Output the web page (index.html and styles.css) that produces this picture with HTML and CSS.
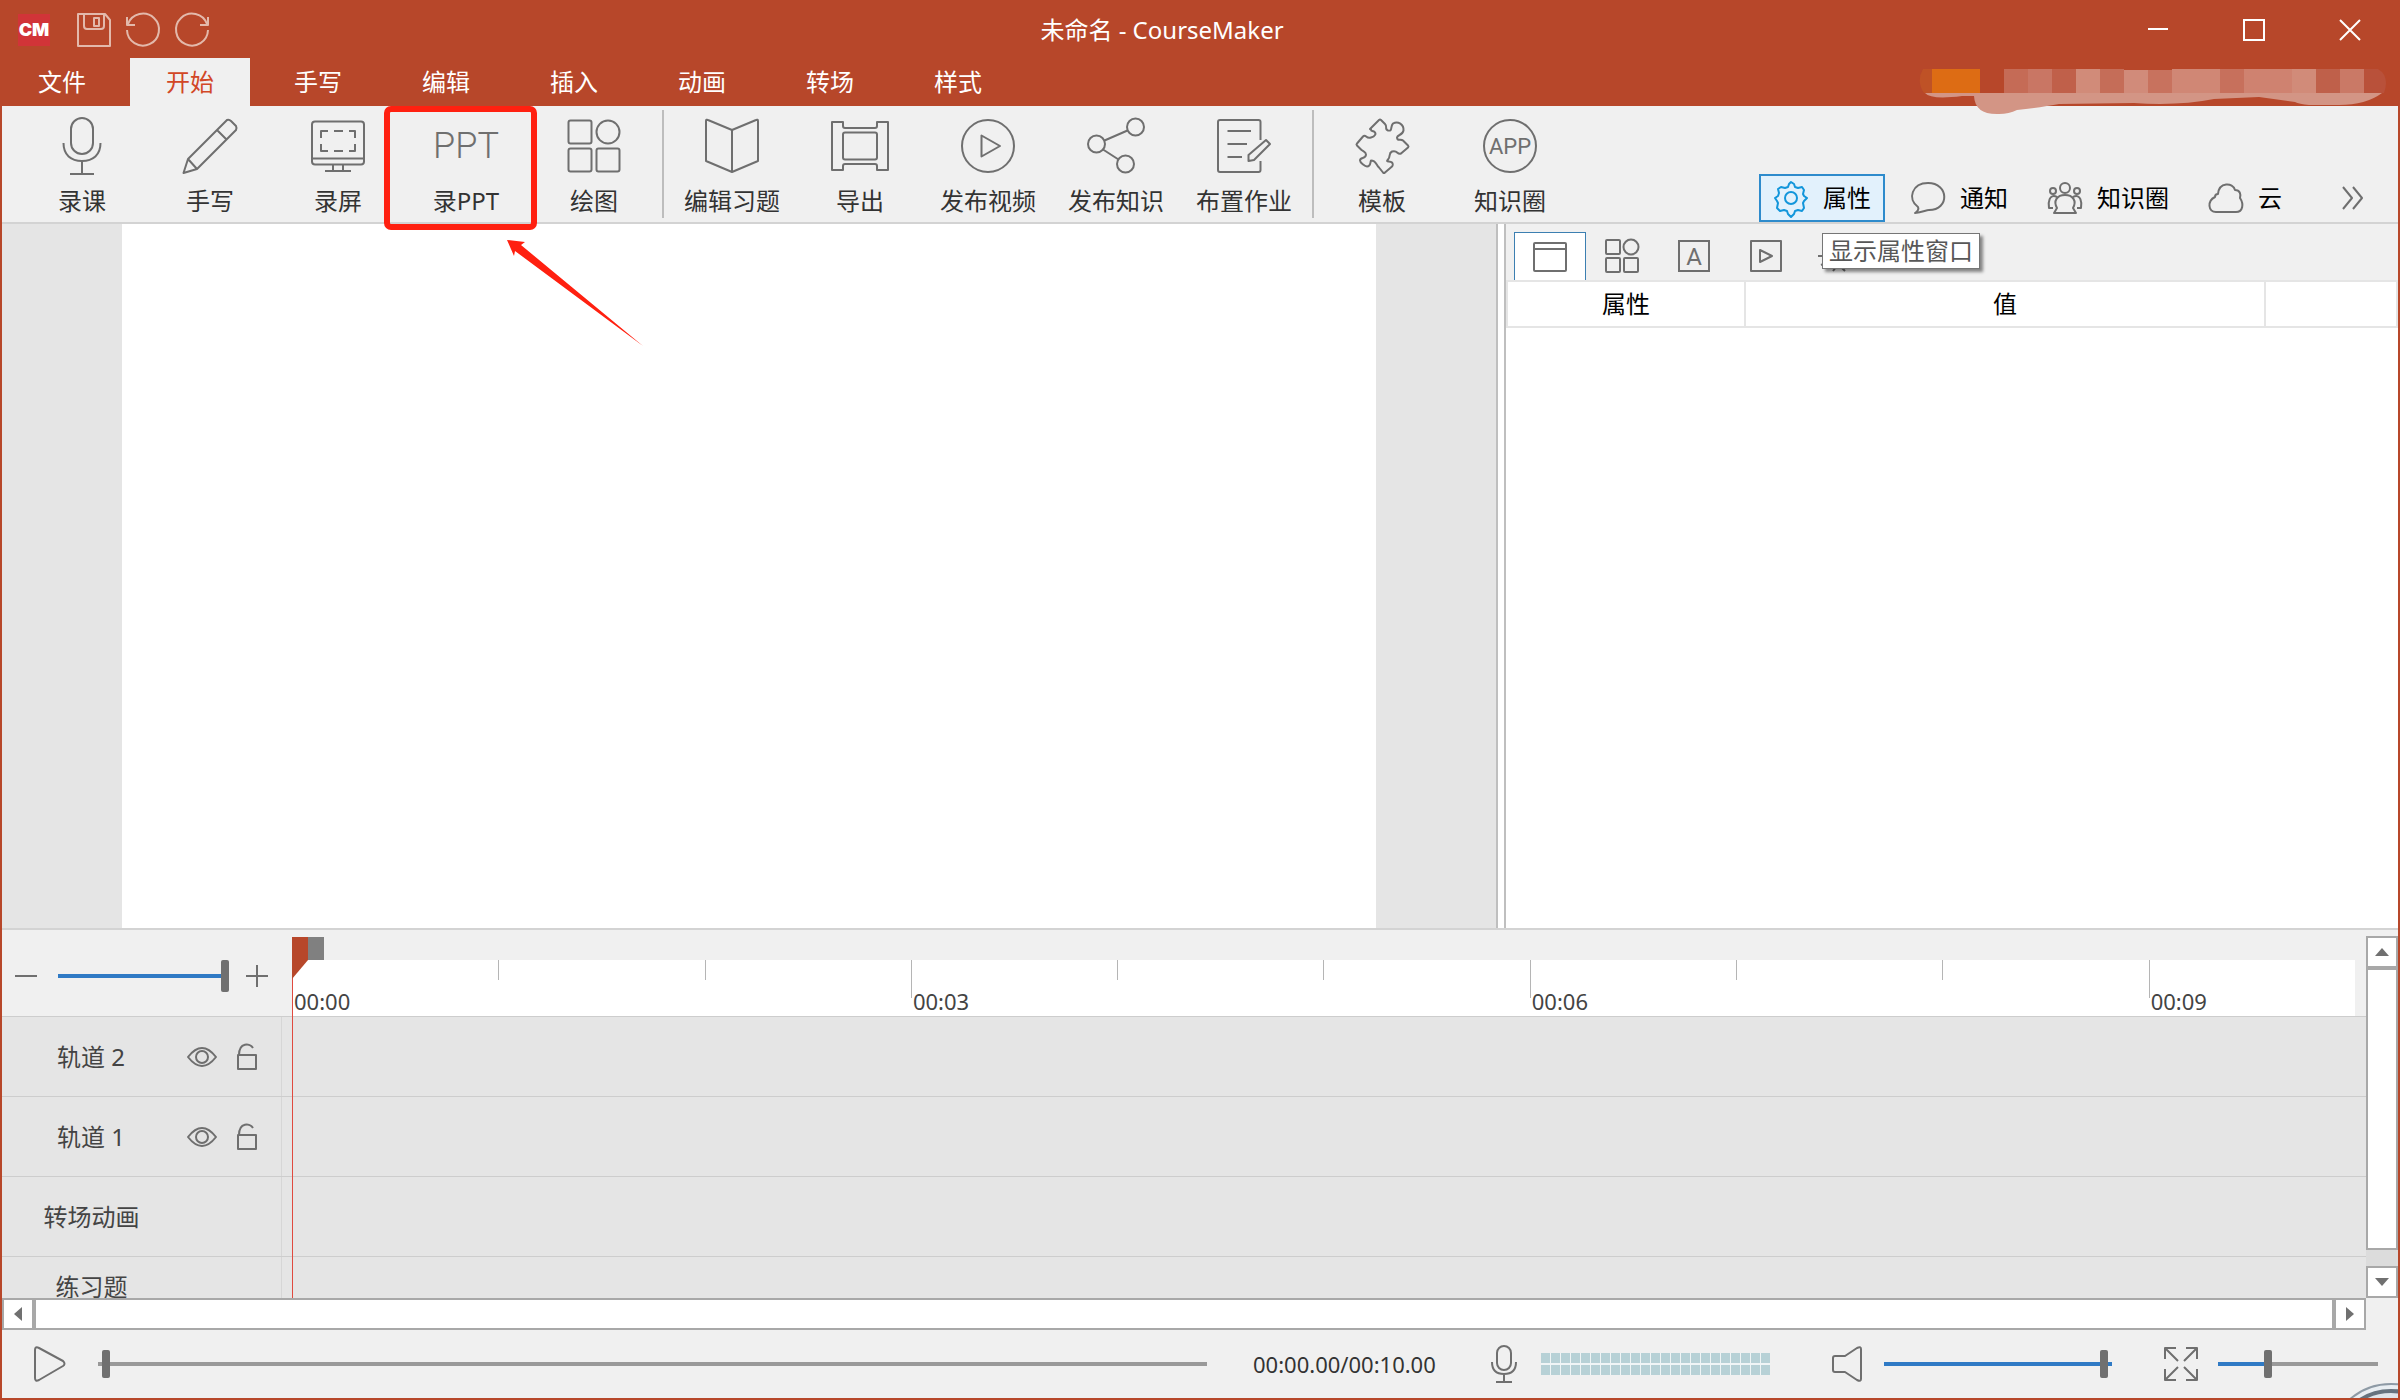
FILE: index.html
```html
<!DOCTYPE html>
<html lang="zh-CN">
<head>
    <meta charset="UTF-8">
    <meta name="viewport" content="width=device-width, initial-scale=1.0">
    <title>未命名 - CourseMaker</title>
    <link rel="stylesheet" href="styles.css">
</head>
<body>
    <header class="titlebar">
        <div class="quick-bar">
            <span class="logo">CM</span>
            <button class="quick-btn" aria-label="保存">
                <svg class="icon" width="34" height="34" viewBox="0 0 34 34"><path d="M1 1h27l5 6v26H1z M7 1v12q0 3 3 3h14q3 0 3-3V1 M17 5h5v8h-5z"/></svg>
            </button>
            <button class="quick-btn" aria-label="撤销">
                <svg class="icon" width="34" height="34" viewBox="0 0 34 34"><path d="M1 4v8h8 M2 11A16 16 0 1 1 1 17"/></svg>
            </button>
            <button class="quick-btn" aria-label="重做">
                <svg class="icon" width="34" height="34" viewBox="0 0 34 34"><path d="M33 4v8h-8 M32 11A16 16 0 1 0 33 17"/></svg>
            </button>
        </div>
        <h1 class="title">未命名 - CourseMaker</h1>
        <div class="window-btns">
            <button aria-label="最小化"><svg class="icon" width="24" height="24" viewBox="0 0 24 24"><path d="M2 11h20"/></svg></button>
            <button aria-label="最大化"><svg class="icon" width="24" height="24" viewBox="0 0 24 24"><path d="M2 2h20v20H2z"/></svg></button>
            <button aria-label="关闭"><svg class="icon" width="24" height="24" viewBox="0 0 24 24"><path d="M2 2l20 20M22 2L2 22"/></svg></button>
        </div>
    </header>

    <nav class="tabs">
        <button class="tab">文件</button>
        <button class="tab active">开始</button>
        <button class="tab">手写</button>
        <button class="tab">编辑</button>
        <button class="tab">插入</button>
        <button class="tab">动画</button>
        <button class="tab">转场</button>
        <button class="tab">样式</button>
        <!-- blurred account name -->
        <svg class="account" width="468" height="48" viewBox="0 0 468 48">
            <path fill="#bf5226" d="M4 1h10v24H5Q-3 13 4 1z"/>
            <path fill="#dd6c14" d="M13 1h48v24H13z"/>
            <path fill="#c56b56" d="M85 1h24v24H85z"/>
            <path fill="#c97664" d="M109 1h24v24h-24z"/>
            <path fill="#c0604a" d="M133 1h24v24h-24z"/>
            <path fill="#d18b79" d="M157 1h24v24h-24z"/>
            <path fill="#c56d58" d="M181 1h24v24h-24z"/>
            <path fill="#d18b7a" d="M205 2h24v23h-24z"/>
            <path fill="#c8725e" d="M229 2h24v23h-24z"/>
            <path fill="#d08775" d="M253 1h48v24h-48z"/>
            <path fill="#c7705c" d="M301 1h24v24h-24z"/>
            <path fill="#cf8270" d="M325 1h48v24h-48z"/>
            <path fill="#d18b79" d="M373 1h24v24h-24z"/>
            <path fill="#bf604a" d="M397 1h24v24h-24z"/>
            <path fill="#ca7966" d="M421 1h24v24h-24z"/>
            <path fill="#b9513a" d="M445 1h14Q471 8 465 25h-20z"/>
            <path fill="#d39585" d="M6 25h457Q447 37 420 37h-30Q380 36 376 34L340 29 295 31Q260 38 215 35L140 36Q125 39 98 42 90 46 80 46 56 47 55 28H43Q12 32 6 25z"/>
        </svg>
    </nav>

    <div class="ribbon">
        <div class="group">
            <button class="tool">
                <svg class="icon" width="64" height="64" viewBox="0 0 64 64"><rect x="21" y="4" width="22" height="36" rx="11"/><path d="M13.500 29C13.500 41 21 47 32 47S50.500 41 50.500 29M32 47v13M20 60h24"/></svg>
                <span>录课</span>
            </button>
            <button class="tool">
                <svg class="icon" width="64" height="64" viewBox="0 0 64 64"><path d="M5.500 59L10 45 49 6q2-1 4 1l5 5q1 2 0 4L19 55zM39 16l9 9M10 45l9 10"/></svg>
                <span>手写</span>
            </button>
            <button class="tool">
                <svg class="icon" width="64" height="64" viewBox="0 0 64 64"><rect x="6" y="7.500" width="52" height="43" rx="3"/><path d="M6 44.500h52M27 51v6M37 51v6M19 57h26"/><path d="M15 24v-7h7M28 17h9M43 17h6v7M15 30v7h7M28 37h9M43 37h6v-7"/></svg>
                <span>录屏</span>
            </button>
            <button class="tool marked">
                <span class="ppt">PPT</span>
                <span>录PPT</span>
            </button>
            <button class="tool">
                <svg class="icon" width="64" height="64" viewBox="0 0 64 64"><rect x="6.500" y="6.500" width="23" height="23" rx="2"/><circle cx="46" cy="18" r="11.500"/><rect x="6.500" y="34.500" width="23" height="23" rx="2"/><rect x="34.500" y="34.500" width="23" height="23" rx="2"/></svg>
                <span>绘图</span>
            </button>
        </div>
        <div class="group">
            <button class="tool">
                <svg class="icon" width="64" height="64" viewBox="0 0 64 64"><path d="M32 16L8 6Q6 5 6 7v40l26 11 26-11V7q0-2-2-1zM32 16v42"/></svg>
                <span>编辑习题</span>
            </button>
            <button class="tool">
                <svg class="icon" width="64" height="64" viewBox="0 0 64 64"><path d="M4 8h11v4q0 2 2 2h30q2 0 2-2V8h11v48H49v-4q0-2-2-2H17q-2 0-2 2v4H4z"/><rect x="15" y="18.500" width="34" height="27" rx="2"/></svg>
                <span>导出</span>
            </button>
            <button class="tool">
                <svg class="icon" width="64" height="64" viewBox="0 0 64 64"><circle cx="32" cy="32" r="26"/><path d="M25.500 21.500v21L44 32z"/></svg>
                <span>发布视频</span>
            </button>
            <button class="tool">
                <svg class="icon" width="64" height="64" viewBox="0 0 64 64"><circle cx="51.500" cy="13" r="8.500"/><circle cx="12.500" cy="30" r="8.500"/><circle cx="41.500" cy="50" r="8.500"/><path d="M20.500 26.500l23-10M19 35.500l15.500 10"/></svg>
                <span>发布知识</span>
            </button>
            <button class="tool">
                <svg class="icon" width="64" height="64" viewBox="0 0 64 64"><path d="M48.500 26V8q0-2-2-2H8Q6 6 6 8v48q0 2 2 2h38.500q2 0 2-2v-9M15.500 17H39M15.500 30H35M15.500 43H30M36.500 47v-6L54 26l4 4-16 16z"/></svg>
                <span>布置作业</span>
            </button>
        </div>
        <div class="group">
            <button class="tool">
                <svg class="icon" width="64" height="64" viewBox="0 0 64 64"><path d="M20 15l9-9q1-1 2 0l4 4c3 3-1 5 3 6.500 5 1 2-4 5-7 5-3 11 1 10.500 7-1 5-6 4-6.500 7 0 4 4 1 6 3l5 5q1 1 0 2l-7 6c-4 2-3-4-9-2-4 2-1 5-4 8-3 3 2 1 4 3 1 1 1 3 0 4l-7 6q-1 1-2 0l-4-5c-3-3-3-7-8-7-1 2 0 6-4 6-2 0-7-4-7-6 0-4 6-1 6-6 0-3-3-3-5-5l-4-4q-1-1 0-2l6-7c3-3 3 3 8 1 4-1 6-4 3-6-2-1-3 0-3-2z"/></svg>
                <span>模板</span>
            </button>
            <button class="tool">
                <span class="app">APP</span>
                <span>知识圈</span>
            </button>
        </div>
        <div class="side-tabs">
            <button class="side-tab active">
                <svg class="icon" width="36" height="36" viewBox="0 0 36 36"><circle cx="18" cy="18" r="6"/><path d="M18 2l3 2 1 3 3 1 4-1 2 3-1 4 1 2 3 2-3 3-1 2 1 5-2 3-4-1-3 1-1 3-3 3-3-3-1-3-3-1-4 1-3-3 1-5-1-2-2-3 3-2 1-3-1-4 3-2 4 1 3-1 1-3z"/></svg>
                <span>属性</span>
            </button>
            <button class="side-tab">
                <svg class="icon" width="36" height="36" viewBox="0 0 36 36"><path d="M8 27C-3 19 2 3 18 3c21 0 22 27 1 27-3 0-6 2-14 3 3-2 4-4 3-6z"/></svg>
                <span>通知</span>
            </button>
            <button class="side-tab">
                <svg class="icon" width="36" height="36" viewBox="0 0 36 36"><circle cx="18" cy="8" r="5"/><circle cx="6" cy="11" r="3"/><circle cx="30" cy="11" r="3"/><path d="M10 28c-4-7 0-13 8-13s12 6 8 13l3 5H7zM10 17c-8-4-9 6-8 11h4M26 17c8-4 9 6 8 11h-4"/></svg>
                <span>知识圈</span>
            </button>
            <button class="side-tab">
                <svg class="icon" width="36" height="36" viewBox="0 0 36 36"><path d="M10 14C11 2 25 2 27 10c5 0 6 4 5 8 4 6 3 14-4 14H8c-8 0-9-11-1-15 0-2 1-3 3-3z"/></svg>
                <span>云</span>
            </button>
            <button class="more" aria-label="更多"><svg class="icon" width="22" height="24" viewBox="0 0 22 24"><path d="M1 1l9 11-9 11M11 1l9 11-9 11"/></svg></button>
        </div>
    </div>

    <main class="workspace">
        <div class="stage"><div class="slide"></div></div>
        <div class="splitter"></div>
        <aside class="panel">
            <div class="panel-tabs">
                <button class="panel-tab active" aria-label="窗口"><svg class="icon" width="36" height="36" viewBox="0 0 36 36"><rect x="2" y="4" width="32" height="28" rx="1"/><path d="M2 10h32"/></svg></button>
                <button class="panel-tab" aria-label="形状"><svg class="icon" width="36" height="36" viewBox="0 0 36 36"><rect x="2" y="2" width="14" height="14" rx="1"/><circle cx="27" cy="9" r="7.500"/><rect x="2" y="20" width="14" height="14" rx="1"/><rect x="20" y="20" width="14" height="14" rx="1"/></svg></button>
                <button class="panel-tab" aria-label="文字"><span class="letter">A</span></button>
                <button class="panel-tab" aria-label="视频"><svg class="icon" width="36" height="36" viewBox="0 0 36 36"><rect x="3" y="3" width="30" height="30"/><path d="M12 12v12l12-6z"/></svg></button>
                <button class="panel-tab" aria-label="效果"><svg class="icon" width="36" height="36" viewBox="0 0 36 36"><path d="M-2 18h8M1 27l5-2M13 33l4-5h3l5 5"/></svg></button>
                <span class="tooltip" role="tooltip">显示属性窗口</span>
            </div>
            <table class="props">
                <thead>
                    <tr><th class="col-name">属性</th><th class="col-value">值</th><th></th></tr>
                </thead>
            </table>
        </aside>
    </main>

    <section class="timeline">
        <div class="timeline-main">
            <div class="time-head">
                <div class="zoom">
                    <button aria-label="缩小"><svg class="icon" width="24" height="24" viewBox="0 0 24 24"><path d="M1 12h22"/></svg></button>
                    <input class="slider" type="range" aria-label="时间轴缩放" min="0" max="100" value="100" style="--fill: 100%">
                    <button aria-label="放大"><svg class="icon" width="24" height="24" viewBox="0 0 24 24"><path d="M1 12h22M12 1v22"/></svg></button>
                </div>
                <div class="ruler">
                    <div class="cell major"><span>00:00</span></div>
                    <div class="cell"></div>
                    <div class="cell"></div>
                    <div class="cell major"><span>00:03</span></div>
                    <div class="cell"></div>
                    <div class="cell"></div>
                    <div class="cell major"><span>00:06</span></div>
                    <div class="cell"></div>
                    <div class="cell"></div>
                    <div class="cell major"><span>00:09</span></div>
                </div>
            </div>
            <div class="track">
                <div class="track-head">
                    <span class="track-name">轨道 2</span>
                    <button aria-label="显示轨道 2"><svg class="icon" width="30" height="26" viewBox="0 0 30 26"><path d="M1 13Q15-5 29 13 15 31 1 13z"/><circle cx="15" cy="13" r="6"/></svg></button>
                    <button aria-label="锁定轨道 2"><svg class="icon" width="20" height="26" viewBox="0 0 20 26"><path d="M1 11h18v14H1zM2 11C2-2 13-1 16 4"/></svg></button>
                </div>
            </div>
            <div class="track">
                <div class="track-head">
                    <span class="track-name">轨道 1</span>
                    <button aria-label="显示轨道 1"><svg class="icon" width="30" height="26" viewBox="0 0 30 26"><path d="M1 13Q15-5 29 13 15 31 1 13z"/><circle cx="15" cy="13" r="6"/></svg></button>
                    <button aria-label="锁定轨道 1"><svg class="icon" width="20" height="26" viewBox="0 0 20 26"><path d="M1 11h18v14H1zM2 11C2-2 13-1 16 4"/></svg></button>
                </div>
            </div>
            <div class="track"><div class="track-head plain">转场动画</div></div>
            <div class="track cut"><div class="track-head plain">练习题</div></div>
            <div class="playhead">
                <svg width="32" height="42" viewBox="0 0 32 42"><path fill="#808080" d="M16 0h16v23H16z"/><path fill="#b7472a" d="M0 0h16v23L0 42z"/></svg>
            </div>
        </div>
        <div class="vscroll">
            <button aria-label="向上滚动"><svg width="14" height="8" viewBox="0 0 14 8"><path d="M0 8l7-8 7 8z"/></svg></button>
            <div class="thumb"></div>
            <button aria-label="向下滚动"><svg width="14" height="8" viewBox="0 0 14 8"><path d="M0 0h14L7 8z"/></svg></button>
        </div>
    </section>
    <div class="hscroll">
        <button aria-label="向左滚动"><svg width="8" height="14" viewBox="0 0 8 14"><path d="M8 0v14L0 7z"/></svg></button>
        <div class="thumb"></div>
        <button aria-label="向右滚动"><svg width="8" height="14" viewBox="0 0 8 14"><path d="M0 0l8 7-8 7z"/></svg></button>
    </div>

    <footer class="player">
        <button aria-label="播放"><svg class="icon" width="32" height="36" viewBox="0 0 32 36"><path d="M1 4q0-4 4-2l24 13q3 3 0 5L5 34q-4 2-4-2z"/></svg></button>
        <input class="slider seek" type="range" aria-label="播放进度" min="0" max="1000" value="4" style="--fill: 0%">
        <span class="time">00:00.00/00:10.00</span>
        <button aria-label="麦克风"><svg class="icon" width="26" height="40" viewBox="0 0 26 40"><rect x="6" y="2" width="14" height="24" rx="7"/><path d="M1 18c0 8 4 12 12 12s12-4 12-12M13 30v8M5 38h16"/></svg></button>
        <div class="meter"></div>
        <button class="speaker" aria-label="音量"><svg class="icon" width="30" height="36" viewBox="0 0 30 36"><path d="M1 12q0-2 2-2h10L25 2q4-2 4 1v30q0 3-4 1l-12-8H3q-2 0-2-2z"/></svg></button>
        <input class="slider volume" type="range" aria-label="音量大小" min="0" max="100" value="98" style="--fill: 100%">
        <button class="fit" aria-label="适应窗口"><svg class="icon" width="34" height="36" viewBox="0 0 34 36"><path d="M1 13V2h11M1 2l13 13M22 2h11v11M33 2L20 15M1 23v11h11M1 34l13-13M22 34h11V23M33 34L20 21"/></svg></button>
        <input class="slider scale" type="range" aria-label="画布缩放" min="0" max="100" value="30" style="--fill: 31%">
        <svg class="corner" width="52" height="18" viewBox="0 0 52 18"><circle cx="43" cy="65" r="63" fill="#e9eef2" stroke="#8e9aa5" stroke-width="2"/><circle cx="43" cy="66" r="57" fill="#dfe5ea" stroke="#66737e" stroke-width="4"/></svg>
    </footer>
</body>
</html>
```
FILE: styles.css
```css
*, *::before, *::after {
    box-sizing: border-box;
}

html, body {
    height: 100%;
    margin: 0;
}

body {
    display: flex;
    flex-direction: column;
    overflow: hidden;
    border: 2px solid #b7472a;
    border-top: none;
    background-color: #f0f0f0;
    color: #333;
    font-family: "Noto Sans", "Noto Sans CJK SC", sans-serif;
    font-size: 24px;
    line-height: 32px;
}

button {
    display: flex;
    align-items: center;
    justify-content: center;
    padding: 0;
    border: none;
    background: none;
    color: inherit;
    font: inherit;
    cursor: pointer;
}

svg {
    display: block;
    flex: none;
}

.icon {
    fill: none;
    stroke: #6f6f6f;
    stroke-width: 2;
    stroke-linejoin: round;
    overflow: visible;
}

/* title bar */
.titlebar {
    display: flex;
    height: 58px;
    background-color: #b7472a;
    color: #fff;
}

.quick-bar {
    display: flex;
    align-items: center;
    gap: 15px;
    width: 212px;
    padding: 2px 0 0 16px;
}

.logo {
    width: 32px;
    margin-right: 12px;
    background-color: #d13438;
    font-family: Inter, sans-serif;
    font-size: 18px;
    font-weight: 900;
    text-align: center;
}

.quick-btn .icon {
    stroke: #e3b9ab;
}

.title {
    flex: 1;
    margin: 0;
    font-size: 24px;
    font-weight: normal;
    line-height: 60px;
    text-align: center;
}

.window-btns {
    display: flex;
}

.window-btns button {
    width: 96px;
    height: 60px;
}

.window-btns .icon {
    stroke: #fff;
    stroke-linejoin: miter;
}

/* menu tabs */
.tabs {
    position: relative;
    display: flex;
    gap: 8px;
    height: 48px;
    background-color: #b7472a;
    color: #fff;
}

.tab {
    width: 120px;
}

.tab.active {
    background-color: #f0f0f0;
    color: #d24726;
}

.account {
    position: absolute;
    top: 10px;
    right: 11px;
    z-index: 1;
}

/* ribbon */
.ribbon {
    display: flex;
    height: 118px;
    padding: 0 19px 0 16px;
    border-bottom: 2px solid #d3d3d3;
}

.group {
    display: flex;
}

.group + .group {
    margin-left: 4px;
    padding-left: 4px;
    background: linear-gradient(#bdbdbd, #bdbdbd) 0 4px / 2px 108px no-repeat;
    border-left: 2px solid transparent;
    background-origin: border-box;
    background-clip: border-box;
}

.tool {
    flex-direction: column;
    justify-content: flex-start;
    gap: 7px;
    width: 128px;
    padding-top: 8px;
    white-space: nowrap;
}

.tool.marked {
    position: relative;
}

.tool.marked::before {
    content: "";
    position: absolute;
    top: 0;
    left: -18px;
    width: 153px;
    height: 124px;
    border: 6px solid #ff2010;
    border-radius: 7px;
}

.tool.marked::after {
    content: "";
    position: absolute;
    top: 134px;
    left: 105px;
    width: 136px;
    height: 106px;
    background-color: #ff2010;
    clip-path: polygon(0 0, 18px 2px, 14px 5px, 100% 100%, 8px 11px, 7px 16px);
}

.ppt {
    height: 64px;
    color: #6f6f6f;
    font-family: Roboto, sans-serif;
    font-size: 36px;
    font-weight: 300;
    line-height: 64px;
}

.app {
    width: 54px;
    height: 54px;
    margin: 5px 0;
    border: 2px solid #6f6f6f;
    border-radius: 50%;
    color: #6f6f6f;
    font-family: Roboto, sans-serif;
    font-size: 22px;
    font-weight: 400;
    line-height: 52px;
}

.side-tabs {
    display: flex;
    align-items: flex-end;
    gap: 11px;
    margin-left: auto;
    color: #000;
}

.side-tab {
    gap: 14px;
    height: 48px;
    padding: 0 14px;
}

.side-tab.active {
    padding: 0 12px;
    border: 2px solid #2e8bcc;
    background-color: #e2f1fc;
}

.side-tab.active .icon {
    stroke: #1296db;
}

.more {
    width: 52px;
    height: 48px;
    margin-left: 20px;
}

/* canvas and property panel */
.workspace {
    display: flex;
    flex: 1;
    min-height: 0;
    background-color: #fff;
}

.stage {
    display: flex;
    flex: 1;
    padding: 0 120px;
    background-color: #e5e5e5;
}

.slide {
    flex: 1;
    background-color: #fff;
}

.splitter {
    width: 10px;
    border: 2px solid #bfbfbf;
    border-width: 0 2px;
}

.panel {
    width: 892px;
}

.panel-tabs {
    position: relative;
    display: flex;
    padding: 8px 8px 0;
    background-color: #f0f0f0;
}

.panel-tab {
    width: 72px;
    height: 48px;
}

.panel-tab.active {
    border: 1px solid #3c7fb1;
    border-bottom: none;
    background-color: #fff;
}

.letter {
    width: 32px;
    height: 32px;
    border: 2px solid #6f6f6f;
    color: #6f6f6f;
    font-family: Roboto, sans-serif;
    font-weight: 400;
    line-height: 30px;
}

.tooltip {
    position: absolute;
    top: 9px;
    left: 316px;
    padding: 1px 6px;
    border: 1px solid #767676;
    background-color: #fff;
    box-shadow: 3px 3px 3px rgba(0, 0, 0, 0.45);
    color: #575757;
}

.props {
    width: 100%;
    border-collapse: collapse;
    table-layout: fixed;
    color: #000;
}

.props th {
    height: 46px;
    padding: 0;
    border: 2px solid #e5e5e5;
    font-weight: normal;
}

.col-name {
    width: 238px;
}

.col-value {
    width: 520px;
}

/* timeline */
.timeline {
    display: flex;
    border-top: 2px solid #d3d3d3;
}

.timeline-main {
    position: relative;
    flex: 1;
    color: #444;
}

.time-head {
    display: flex;
    height: 86px;
    padding-right: 11px;
}

.zoom {
    display: flex;
    align-items: center;
    gap: 16px;
    width: 290px;
    padding: 6px 23px 0 12px;
}

.slider {
    flex: 1;
    min-width: 0;
    height: 32px;
    margin: 0;
    appearance: none;
    background: linear-gradient(to right, #2f7ac5 var(--fill), #999 var(--fill)) center / 100% 4px no-repeat;
}

.slider::-webkit-slider-thumb {
    appearance: none;
    width: 8px;
    height: 28px;
    border-radius: 2px;
    background-color: #707070;
}

.zoom .slider {
    margin-left: 4px;
}

.zoom .slider::-webkit-slider-thumb {
    height: 32px;
}

.ruler {
    display: flex;
    flex: 1;
    margin-top: 30px;
    background-color: #fff;
    font-size: 22px;
}

.cell {
    display: flex;
    flex: 1;
    align-items: flex-end;
    background: linear-gradient(#b5b5b5, #b5b5b5) 0 0 / 1px 20px no-repeat;
}

.cell.major {
    background-size: 1px 38px;
}

.cell span {
    padding-left: 2px;
    line-height: 30px;
}

.track {
    height: 80px;
    border-top: 1px solid #cdcdcd;
    background-color: #e5e5e5;
}

.track.cut {
    height: 42px;
    overflow: hidden;
}

.track-head {
    display: flex;
    align-items: center;
    gap: 20px;
    width: 280px;
    height: 79px;
    padding-left: 55px;
    border-right: 1px solid #d6d6d6;
}

.track-name {
    width: 110px;
}

.track-head.plain {
    justify-content: center;
    padding: 0 100px 0 0;
}

.track.cut .track-head {
    height: 60px;
}

.playhead {
    position: absolute;
    top: 7px;
    bottom: 0;
    left: 290px;
    width: 1px;
    background-color: #e04a3f;
}

.vscroll {
    display: flex;
    flex-direction: column;
    width: 32px;
    margin-top: 6px;
    background-color: #dcdcdc;
}

.vscroll button, .hscroll button, .thumb {
    border: 2px solid #a8a8a8;
    background-color: #fff;
}

.vscroll button, .hscroll button {
    width: 32px;
    height: 32px;
    fill: #707070;
}

.thumb {
    flex: 1;
}

.vscroll .thumb {
    margin-bottom: 16px;
}

.hscroll {
    display: flex;
    margin-right: 32px;
}

/* playback bar */
.player {
    position: relative;
    display: flex;
    align-items: center;
    height: 68px;
    padding: 0 20px 0 32px;
    overflow: hidden;
}

.seek {
    margin: 0 46px 0 32px;
}

.time {
    width: 186px;
    margin-right: 52px;
    font-size: 22px;
    white-space: nowrap;
}

/* 23 x 2 level blocks */
.meter {
    width: 229px;
    height: 22px;
    margin-left: 24px;
    background:
        linear-gradient(#f0f5f6, #f0f5f6) 0 10px / 100% 2px no-repeat,
        repeating-linear-gradient(to right, #b7d1d6 0 9px, #f0f5f6 9px 10px);
}

.speaker {
    margin: 0 22px 0 62px;
}

.volume {
    flex: none;
    width: 228px;
}

.fit {
    margin: 0 20px 0 52px;
}

.scale {
    flex: none;
    width: 160px;
}

.corner {
    position: absolute;
    right: -2px;
    bottom: -2px;
}
```
